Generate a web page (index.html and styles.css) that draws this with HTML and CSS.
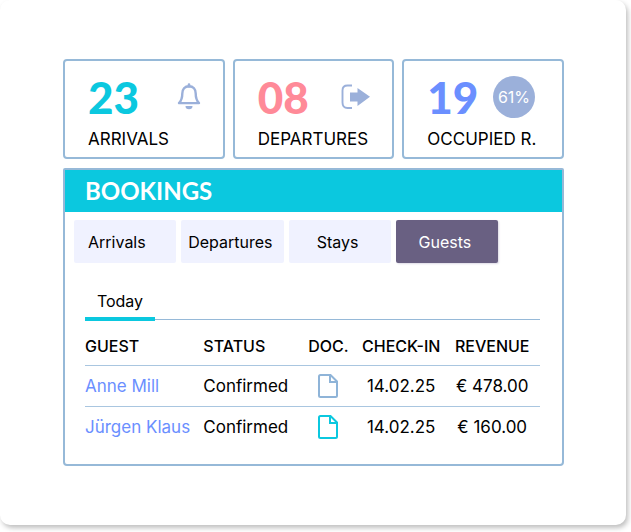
FILE: index.html
```
<!DOCTYPE html>
<html lang="en">
<head>
    <meta charset="utf-8">
    <title>Bookings</title>
    <link rel="stylesheet" href="styles.css">
</head>
<body>
    <main class="card">
        <section class="stats">
            <div class="stat">
                <div class="stat-top">
                    <span class="number cyan">23</span>
                    <svg class="stat-icon" width="26" height="28" viewBox="0 0 26 28">
                        <path d="M13 3.200c-4.300 0-6.700 3-6.700 7.200 0 4.600-.8 7-3.300 9.700h20c-2.500-2.700-3.300-5.100-3.300-9.700 0-4.200-2.400-7.200-6.700-7.200z" fill="none" stroke="#9bb0da" stroke-width="2.400" stroke-linejoin="round"/>
                        <path d="M13 1.500v2" stroke="#9bb0da" stroke-width="2.600" stroke-linecap="round"/>
                        <path d="M9.500 23h7a3.500 3.300 0 0 1-7 0z" fill="#9bb0da"/>
                    </svg>
                </div>
                <div class="stat-label">ARRIVALS</div>
            </div>
            <div class="stat">
                <div class="stat-top">
                    <span class="number pink">08</span>
                    <svg class="stat-icon" width="30" height="26" viewBox="0 0 30 26">
                        <path d="M11 1.500H6.500Q1.500 1.500 1.500 6.500v12Q1.500 24 6.500 24H11" fill="none" stroke="#9bb0da" stroke-width="1.900"/>
                        <path d="M9 8.500H16.500V4L29 12.800 16.500 22v-4.500H9z" fill="#9bb0da"/>
                    </svg>
                </div>
                <div class="stat-label">DEPARTURES</div>
            </div>
            <div class="stat">
                <div class="stat-top">
                    <span class="number blue">19</span>
                    <span class="percent">61%</span>
                </div>
                <div class="stat-label">OCCUPIED R.</div>
            </div>
        </section>

        <section class="bookings">
            <h1 class="title">BOOKINGS</h1>
            <nav class="tabs">
                <button class="tab first" type="button">Arrivals</button>
                <button class="tab" type="button">Departures</button>
                <button class="tab" type="button">Stays</button>
                <button class="tab active" type="button">Guests</button>
            </nav>
            <div class="list">
                <div class="days">
                    <button class="day" type="button">Today</button>
                </div>
                <table class="guests">
                    <thead>
                        <tr>
                            <th class="col-guest">GUEST</th>
                            <th class="col-status">STATUS</th>
                            <th class="col-doc">DOC.</th>
                            <th class="col-date">CHECK-IN</th>
                            <th class="col-revenue">REVENUE</th>
                        </tr>
                    </thead>
                    <tbody>
                        <tr>
                            <td><a href="#">Anne Mill</a></td>
                            <td>Confirmed</td>
                            <td class="col-doc">
                                <svg class="doc" width="20" height="24" viewBox="0 0 20 24">
                                    <path d="M2.500 1H12.500L19 7.500V21.500Q19 23 17.500 23H2.500Q1 23 1 21.500V2.500Q1 1 2.500 1zM12 1.500V8H18.500"/>
                                </svg>
                            </td>
                            <td class="col-date">14.02.25</td>
                            <td class="col-revenue">€ 478.00</td>
                        </tr>
                        <tr>
                            <td><a href="#">Jürgen Klaus</a></td>
                            <td>Confirmed</td>
                            <td class="col-doc">
                                <svg class="doc doc-new" width="20" height="24" viewBox="0 0 20 24">
                                    <path d="M2.500 1H12.500L19 7.500V21.500Q19 23 17.500 23H2.500Q1 23 1 21.500V2.500Q1 1 2.500 1zM12 1.500V8H18.500"/>
                                </svg>
                            </td>
                            <td class="col-date">14.02.25</td>
                            <td class="col-revenue">€ 160.00</td>
                        </tr>
                    </tbody>
                </table>
            </div>
        </section>
    </main>
</body>
</html>
```
FILE: styles.css
```
* { box-sizing: border-box; }
body {
    margin: 0;
    padding: 0 5px 7px 0;
    background: #fff;
    color: #000;
    font-family: Inter, "Liberation Sans", sans-serif;
    font-size: 17px;
    line-height: 20px;
}
button {
    border: none;
    padding: 0;
    background: none;
    color: inherit;
    font: inherit;
    cursor: pointer;
}
.card {
    display: flex;
    flex-direction: column;
    gap: 9px;
    padding: 59px 62px 59px 63px;
    background: #fff;
    border-radius: 10px;
    box-shadow: 2px 3px 5px rgba(0, 0, 0, 0.25);
}

/* top counters */
.stats {
    display: grid;
    grid-template-columns: repeat(3, 1fr);
    gap: 8px;
}
.stat {
    padding: 12px 21px 8px 23px;
    border: 2px solid #96b9d8;
    border-radius: 4px;
}
.stat-top {
    display: flex;
    align-items: center;
    justify-content: space-between;
    height: 48px;
}
.number {
    font: 900 44px/46px Lato, sans-serif;
}
.cyan { color: #0bc8df; }
.pink { color: #ff8a98; }
.blue { color: #6b8fff; }
.stat-icon { flex: none; }
.percent {
    width: 42px;
    height: 42px;
    margin-right: 6px;
    border-radius: 50%;
    background: #9bb0da;
    color: #fff;
    font-size: 16px;
    line-height: 42px;
    text-align: center;
}
.stat-label {
    margin-top: 8px;
    white-space: nowrap;
}

/* bookings panel */
.bookings {
    border: 2px solid #96b9d8;
    border-radius: 2px 2px 4px 4px;
}
.title {
    margin: 0;
    padding: 0 20px;
    background: #0bc8df;
    color: #fff;
    font: 700 24px/42px Lato, sans-serif;
}
.tabs {
    display: grid;
    grid-template-columns: repeat(4, 1fr);
    gap: 5px;
    padding: 8px 64px 0 9px;
}
.tab {
    height: 43px;
    padding-right: 4px;
    border-radius: 2px;
    background: #f0f2ff;
    font-size: 16px;
}
.tab.first {
    padding-left: 14px;
    text-align: left;
}
.tab.active {
    background: #696082;
    color: #fff;
    box-shadow: 1px 1px 2px #dddbe6;
}
.list { padding: 24px 22px 17px 20px; }
.days {
    display: flex;
    border-bottom: 1px solid #96b9d8;
}
.day {
    width: 70px;
    height: 34px;
    margin-bottom: -2px;
    padding-bottom: 2px;
    border-bottom: 4px solid #0bc8df;
    font-size: 16px;
}
.guests {
    width: 100%;
    border-collapse: collapse;
    table-layout: fixed;
}
.guests th,
.guests td {
    height: 41px;
    padding: 0;
    text-align: left;
    vertical-align: middle;
    white-space: nowrap;
}
.guests th {
    height: 45px;
    padding-top: 7px;
    font-size: 16px;
    font-weight: 500;
}
.guests tr { border-bottom: 1px solid #a9c6e0; }
.guests tbody tr:last-child { border-bottom: none; }
.guests a {
    color: #6b8fff;
    text-decoration: none;
}
.guests .col-guest { width: 26%; }
.guests .col-status { width: 21%; }
.guests .col-doc { width: 13%; text-align: center; }
.guests .col-date { width: 19%; text-align: center; }
.guests .col-revenue { width: 21%; text-align: center; }
.doc {
    display: block;
    margin: 0 auto;
    fill: none;
    stroke: #8fb4d8;
    stroke-width: 2;
}
.doc-new { stroke: #0bc8df; }
```
